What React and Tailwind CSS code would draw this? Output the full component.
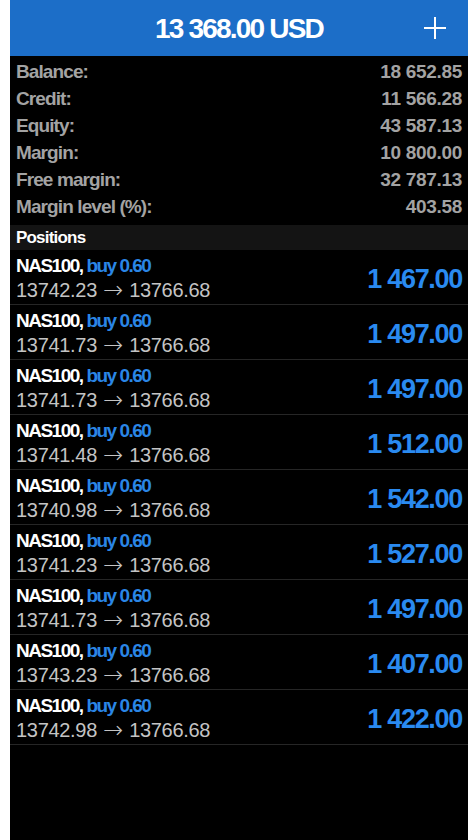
const summary = [
  ['Balance:', '18 652.85'],
  ['Credit:', '11 566.28'],
  ['Equity:', '43 587.13'],
  ['Margin:', '10 800.00'],
  ['Free margin:', '32 787.13'],
  ['Margin level (%):', '403.58'],
];

const positions = [
  ['13742.23', '1 467.00'],
  ['13741.73', '1 497.00'],
  ['13741.73', '1 497.00'],
  ['13741.48', '1 512.00'],
  ['13740.98', '1 542.00'],
  ['13741.23', '1 527.00'],
  ['13741.73', '1 497.00'],
  ['13743.23', '1 407.00'],
  ['13742.98', '1 422.00'],
];

export default function App() {
  return (
    <div className="min-h-[840px] bg-white pl-[10px] pr-[6px] flex" style={{ fontFamily: '"Liberation Sans", Arial, sans-serif' }}>
      <div className="flex-1 bg-black flex flex-col">
        {/* Header */}
        <header className="h-[56px] bg-[#1c6ec8] flex items-center justify-center relative">
          <span className="text-white font-bold text-[28px] tracking-[-1.8px] pt-[1px]">13 368.00 USD</span>
          <svg className="absolute right-[22px] top-[17px]" width="22" height="22" viewBox="0 0 22 22">
            <path d="M11 0v22M0 11h22" stroke="white" strokeWidth="2" />
          </svg>
        </header>

        {/* Account summary */}
        <div className="pt-[3px] pb-[4px] px-[6px]">
          {summary.map(([label, value]) => (
            <div key={label} className="h-[27px] flex items-center justify-between text-[#a3a3a3] font-bold text-[19px]">
              <span className="tracking-[-0.9px]">{label}</span>
              <span className="tracking-[-0.3px]">{value}</span>
            </div>
          ))}
        </div>

        {/* Positions */}
        <div className="h-[25px] bg-[#141414] flex items-center px-[6px] text-white font-bold text-[17px] tracking-[-0.8px]">
          Positions
        </div>
        {positions.map(([open, profit], i) => (
          <div key={i} className="h-[55px] border-b border-[#262626] flex items-center justify-between px-[6px]">
            <div className="flex flex-col pt-[1px]">
              <div className="font-bold text-[19px] leading-[24px] tracking-[-1.5px] text-white">
                NAS100, <span className="text-[#2a86e6]">buy 0.60</span>
              </div>
              <div className="h-[24px] text-[20px] leading-[24px] text-[#c4c4c4] tracking-[-0.3px] flex items-center">
                <span>{open}</span>
                <span className="mx-[6px] text-[24px] leading-[24px] font-extralight tracking-normal" style={{ fontFamily: '"DejaVu Sans", sans-serif' }}>→</span>
                <span>13766.68</span>
              </div>
            </div>
            <div className="text-[#2a8af0] font-bold text-[27px] tracking-[-1.3px] pt-[4px]">{profit}</div>
          </div>
        ))}
      </div>
    </div>
  );
}
